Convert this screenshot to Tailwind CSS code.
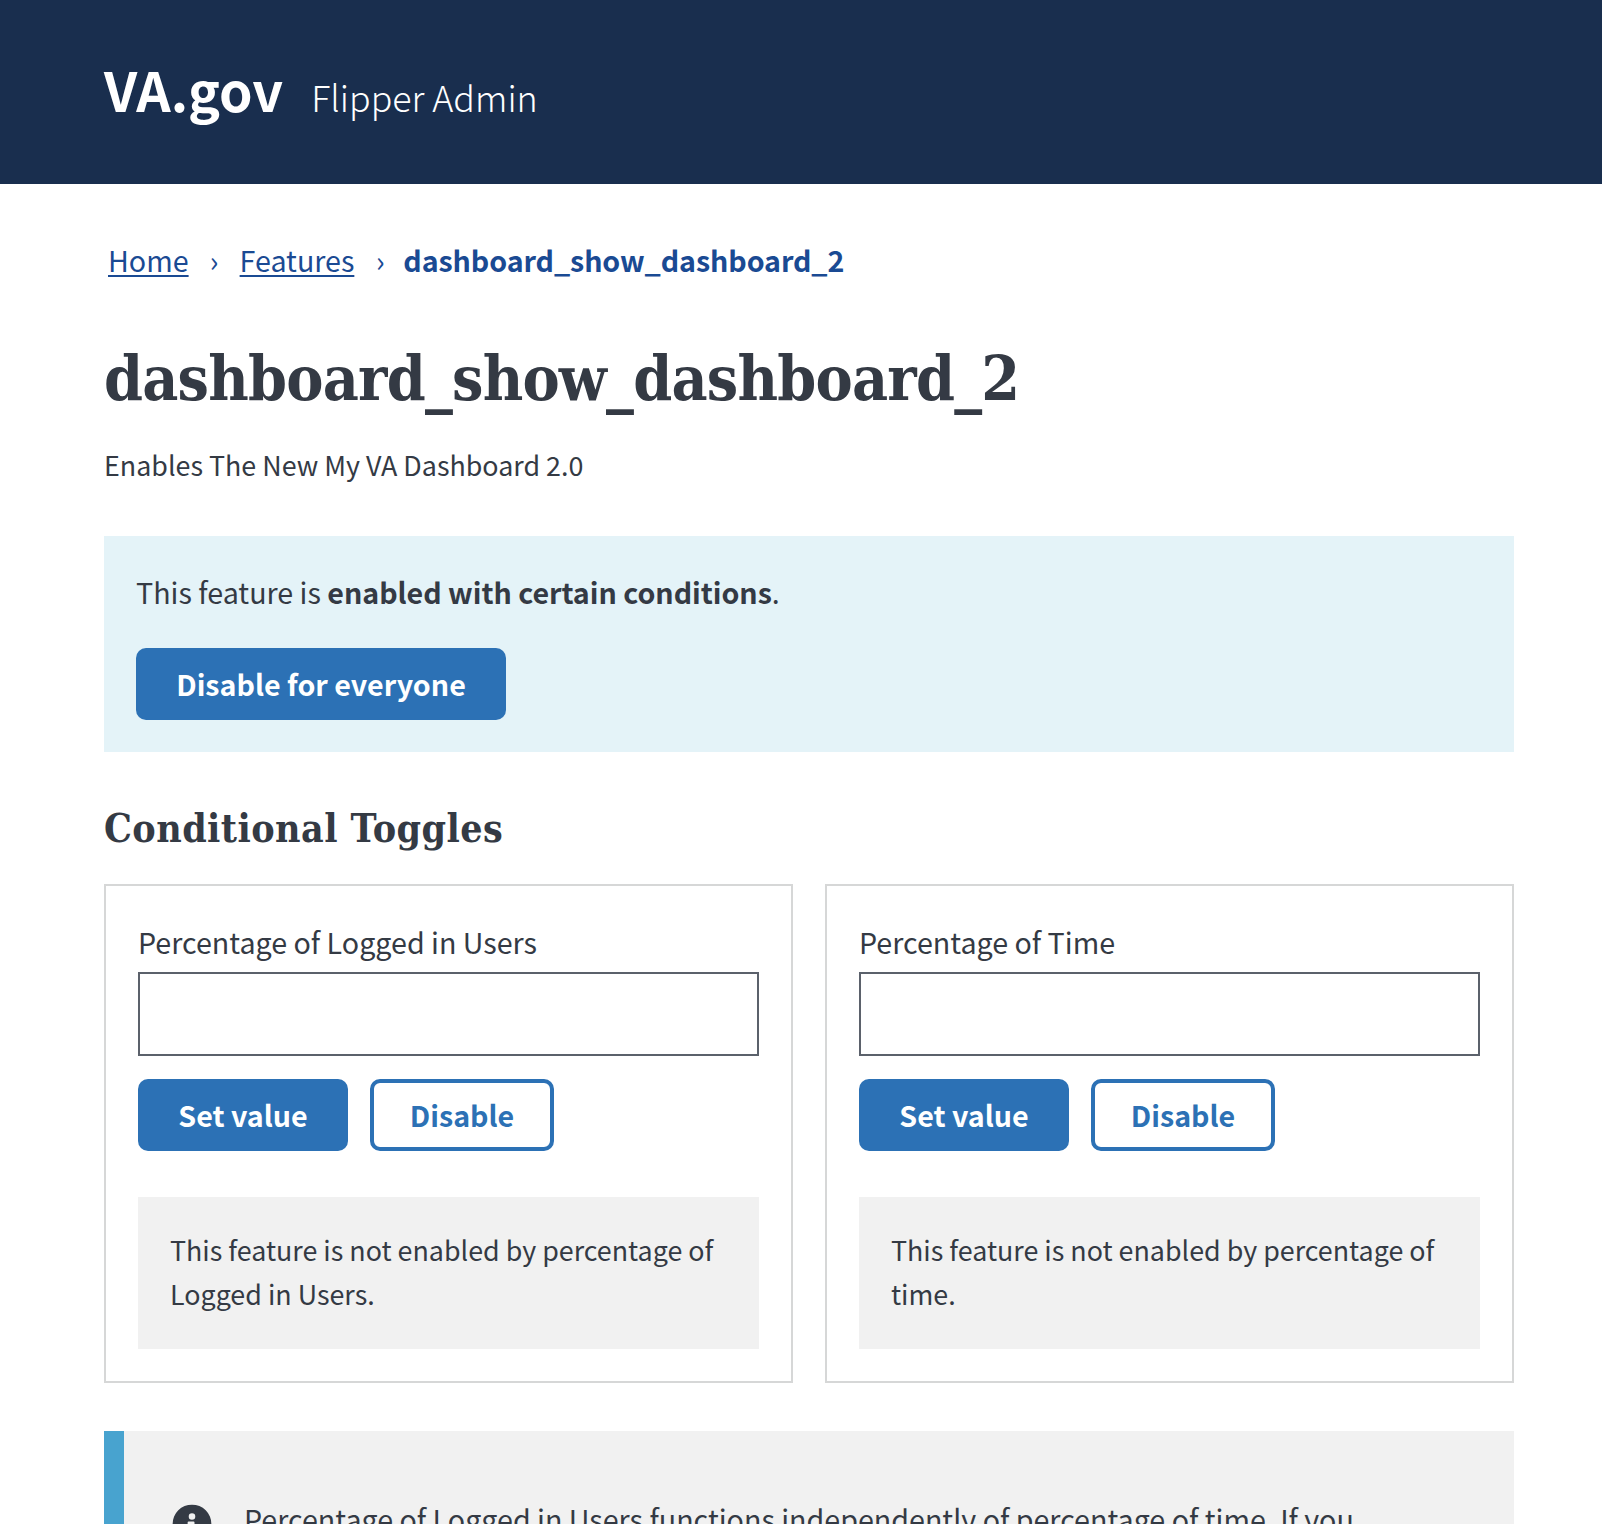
<!DOCTYPE html>
<html lang="en">
<head>
<meta charset="utf-8">
<title>Flipper Admin</title>
<script src="https://cdn.jsdelivr.net/npm/@tailwindcss/browser@4"></script>
</head>
<body class="h-[1524px] overflow-hidden bg-white text-[#343a44] font-['Noto_Sans_CJK_SC',sans-serif] text-[28.65px] leading-[48px]">
<header class="flex h-[184px] items-baseline gap-7 bg-[#192e4e] pl-[104px] leading-[177px] text-white">
  <span class="text-[53.7px] font-bold">VA.gov</span>
  <span class="text-[35.8px] font-light">Flipper Admin</span>
</header>
<main class="pr-[88px] pl-[104px]">
  <nav class="flex pt-[52px] pl-1 text-[#1a4a93]">
    <a class="underline decoration-2 underline-offset-[3px]">Home</a>
    <span class="w-[51px] text-center">›</span>
    <a class="underline decoration-2 underline-offset-[3px]">Features</a>
    <span class="w-[49px] pl-[3px] text-center">›</span>
    <span class="font-bold tracking-[-0.09px]">dashboard_show_dashboard_2</span>
  </nav>
  <h1 class="mt-[55px] text-[62px] leading-[80px] font-bold font-['DejaVu_Serif_Condensed','DejaVu_Serif',serif] tracking-[-0.77px] whitespace-nowrap">dashboard_show_dashboard_2</h1>
  <p class="mt-[24px] text-[26.85px] leading-[44px]">Enables The New My VA Dashboard 2.0</p>
  <section class="mt-[49px] bg-[#e4f3f8] p-8">
    <p>This feature is <b class="tracking-[-0.03px]">enabled with certain conditions</b>.</p>
    <button class="mt-8 block h-[72px] w-[370px] rounded-[10px] bg-[#2c71b5] font-bold text-white">Disable for everyone</button>
  </section>
  <h2 class="mt-12 text-[39px] leading-[56px] font-bold font-['DejaVu_Serif_Condensed','DejaVu_Serif',serif] tracking-[0.43px]">Conditional Toggles</h2>
  <div class="mt-7 grid grid-cols-2 gap-8">
    <section class="border-2 border-[#d6d7d7] p-8">
      <label class="block" for="actors">Percentage of Logged in Users</label>
      <input id="actors" class="mt-1.5 block h-[84px] w-full border-2 border-[#5b616b]">
      <div class="mt-[23px] flex gap-[22px]">
        <button class="h-[72px] w-[210px] rounded-[10px] bg-[#2c71b5] font-bold text-white">Set value</button>
        <button class="h-[72px] w-[184px] rounded-[10px] border-4 border-[#2c71b5] font-bold text-[#2c71b5]">Disable</button>
      </div>
      <p class="mt-[46px] bg-[#f1f1f1] px-8 pt-[31px] pb-[33px] text-[26.85px] leading-[44px]">This feature is not enabled by percentage of<br>Logged in Users.</p>
    </section>
    <section class="border-2 border-[#d6d7d7] p-8">
      <label class="block" for="time">Percentage of Time</label>
      <input id="time" class="mt-1.5 block h-[84px] w-full border-2 border-[#5b616b]">
      <div class="mt-[23px] flex gap-[22px]">
        <button class="h-[72px] w-[210px] rounded-[10px] bg-[#2c71b5] font-bold text-white">Set value</button>
        <button class="h-[72px] w-[184px] rounded-[10px] border-4 border-[#2c71b5] font-bold text-[#2c71b5]">Disable</button>
      </div>
      <p class="mt-[46px] bg-[#f1f1f1] px-8 pt-[31px] pb-[33px] text-[26.85px] leading-[44px]">This feature is not enabled by percentage of<br>time.</p>
    </section>
  </div>
  <section class="mt-12 flex h-[93px] overflow-hidden border-l-[20px] border-[#48a3cf] bg-[#f1f1f1] pt-[64px] pl-12">
    <svg class="mt-[9px] size-10 shrink-0" viewBox="0 0 512 512" fill="#343a44"><path d="M256 8a248 248 0 1 0 0 496 248 248 0 0 0 0-496zm0 110a42 42 0 1 1 0 84 42 42 0 0 1 0-84zm56 254a12 12 0 0 1-12 12h-88a12 12 0 0 1-12-12v-24a12 12 0 0 1 12-12h12v-64h-12a12 12 0 0 1-12-12v-24a12 12 0 0 1 12-12h64a12 12 0 0 1 12 12v100h12a12 12 0 0 1 12 12z"/></svg>
    <p class="ml-8 whitespace-nowrap">Percentage of Logged in Users functions independently of percentage of time. If you</p>
  </section>
</main>
</body>
</html>
